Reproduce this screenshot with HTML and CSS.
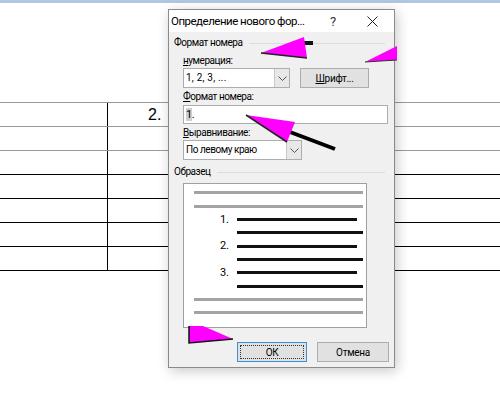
FILE: index.html
```html
<!DOCTYPE html>
<html lang="ru">
<head>
    <meta charset="UTF-8">
    <title>Определение нового формата номера</title>
    <link rel="stylesheet" href="styles.css">
</head>
<body>
    <div class="ribbon-edge"></div>

    <div class="doc">
        <div class="doc-table">
            <div class="doc-row gray"><div class="cell first"></div><div class="cell num">2.</div></div>
            <div class="doc-row gray"><div class="cell first"></div><div class="cell"></div></div>
            <div class="doc-row gray"><div class="cell first"></div><div class="cell"></div></div>
            <div class="doc-row"><div class="cell first"></div><div class="cell"></div></div>
            <div class="doc-row"><div class="cell first"></div><div class="cell"></div></div>
            <div class="doc-row"><div class="cell first"></div><div class="cell"></div></div>
            <div class="doc-row last"><div class="cell first"></div><div class="cell"></div></div>
        </div>
    </div>

    <div class="dialog">
        <div class="titlebar">
            <span class="title">Определение нового фор...</span>
            <span class="tb-help">?</span>
            <span class="tb-close">
                <svg width="11" height="11" viewBox="0 0 11 11"><path d="M0.5 0.5 L10.5 10.5 M10.5 0.5 L0.5 10.5" stroke="#222" stroke-width="1" fill="none"/></svg>
            </span>
        </div>

        <div class="dialog-body">
            <div class="group-head">
                <span>Формат номера</span>
                <div class="group-line"></div>
            </div>

            <div class="group-content">
                <div class="label label-first"><u>н</u>умерация:</div>
                <div class="field-row">
                    <div class="combo combo-num">
                        <span class="combo-text">1, 2, 3, ...</span>
                        <span class="combo-btn">
                            <svg width="9" height="5" viewBox="0 0 9 5"><path d="M0.5 0.5 L4.5 4.5 L8.5 0.5" stroke="#555" fill="none"/></svg>
                        </span>
                    </div>
                    <button class="btn btn-font"><u>Ш</u>рифт...</button>
                </div>

                <div class="label"><u>Ф</u>ормат номера:</div>
                <div class="text-input"><span class="sel">1</span>.</div>

                <div class="label"><u>В</u>ыравнивание:</div>
                <div class="combo combo-align">
                    <span class="combo-text">По левому краю</span>
                    <span class="combo-btn">
                        <svg width="9" height="5" viewBox="0 0 9 5"><path d="M0.5 0.5 L4.5 4.5 L8.5 0.5" stroke="#555" fill="none"/></svg>
                    </span>
                </div>
            </div>

            <div class="group-head group-sample">
                <span>Образец</span>
                <div class="group-line"></div>
            </div>

            <div class="preview">
                <div class="pv-row"><div class="pv-line gray"></div></div>
                <div class="pv-row"><div class="pv-line gray"></div></div>
                <div class="pv-row"><span class="pv-num">1.</span><div class="pv-line short"></div></div>
                <div class="pv-row"><span class="pv-num"></span><div class="pv-line"></div></div>
                <div class="pv-row"><span class="pv-num">2.</span><div class="pv-line short"></div></div>
                <div class="pv-row"><span class="pv-num"></span><div class="pv-line"></div></div>
                <div class="pv-row"><span class="pv-num">3.</span><div class="pv-line short"></div></div>
                <div class="pv-row"><span class="pv-num"></span><div class="pv-line"></div></div>
                <div class="pv-row"><div class="pv-line gray"></div></div>
                <div class="pv-row"><div class="pv-line gray"></div></div>
            </div>

            <div class="buttons">
                <button class="btn btn-ok"><span>ОК</span></button>
                <button class="btn btn-cancel">Отмена</button>
            </div>
        </div>
    </div>

    <!-- annotation arrows drawn over the screenshot -->
    <svg class="marks" width="500" height="394" viewBox="0 0 500 394">
        <rect x="303" y="41" width="10" height="4" fill="#111"/>
        <polygon points="261,53 304,37 307,58" fill="#f0f" />
        <path d="M261 53 L307 58" stroke="#222" stroke-width="1.5"/>

        <polygon points="365,62 397,46 397,60" fill="#f0f" />
        <path d="M365 62 L397 60" stroke="#333" stroke-width="1"/>

        <path d="M290 132 L335 149" stroke="#000" stroke-width="4"/>
        <polygon points="246,115 295,122 287,142" fill="#f0f" />
        <path d="M246 115 L287 142" stroke="#222" stroke-width="1.5"/>

        <polygon points="189,326 203,326 233,339 189,343" fill="#f0f" />
        <path d="M189 326 L189 343 L233 339" stroke="#111" stroke-width="1.5" fill="none"/>
    </svg>
</body>
</html>
```

FILE: styles.css
```css
* {
    box-sizing: border-box;
}

body {
    margin: 0;
    width: 500px;
    height: 394px;
    position: relative;
    overflow: hidden;
    background-color: #ffffff;
    font-family: 'Roboto', 'Noto Sans', sans-serif;
    color: #000;
}

.ribbon-edge {
    height: 3px;
    background-color: #b3c6df;
}

.doc {
    padding-top: 99px;
}

.doc-row {
    display: grid;
    grid-template-columns: 108px 1fr;
    height: 24px;
    border-top: 1px solid #000;
}

.doc-row.gray {
    border-top-color: #999;
}

.doc-row.last {
    height: 25px;
    border-bottom: 1px solid #000;
}

.cell.first {
    border-right: 1px solid #000;
}

.cell.num {
    padding-left: 40px;
    font-family: 'Liberation Sans', sans-serif;
    font-size: 16px;
    line-height: 23px;
}

/* dialog window */
.dialog {
    position: absolute;
    left: 168px;
    top: 9px;
    width: 227px;
    height: 359px;
    border: 1px solid #8a8a8a;
    background-color: #f0f0f0;
    box-shadow: 2px 3px 12px rgba(0, 0, 0, 0.22);
    display: flex;
    flex-direction: column;
}

.titlebar {
    height: 22px;
    background-color: #fff;
    display: flex;
    align-items: center;
    padding-left: 2px;
}

.title {
    flex: 1;
    min-width: 0;
    font-size: 11.5px;
    letter-spacing: -0.5px;
    white-space: nowrap;
}

.tb-help {
    width: 34px;
    text-align: center;
    font-size: 13px;
    color: #333;
}

.tb-close {
    width: 44px;
    display: flex;
    justify-content: center;
    align-items: center;
}

.dialog-body {
    flex: 1;
    padding: 4px 5px 0 5px;
    font-size: 10px;
    letter-spacing: -0.45px;
    display: flex;
    flex-direction: column;
}

.group-head {
    display: flex;
    align-items: center;
    height: 14px;
    line-height: 14px;
}

.group-line {
    flex: 1;
    height: 1px;
    margin-left: 6px;
    margin-right: 4px;
    background-color: #dcdcdc;
}

.group-content {
    padding-left: 9px;
    display: flex;
    flex-direction: column;
}

.label {
    height: 14px;
    line-height: 14px;
    margin-top: 2px;
}

.label-first {
    margin-top: 4px;
}

.field-row {
    display: flex;
    gap: 10px;
}

.combo {
    height: 20px;
    display: flex;
    background-color: #fff;
    border: 1px solid #adadad;
}

.combo-num {
    width: 107px;
}

.combo-align {
    width: 119px;
}

.combo-text {
    flex: 1;
    padding-left: 2px;
    line-height: 18px;
    white-space: nowrap;
}

.combo-num .combo-text {
    letter-spacing: 0.2px;
}

.combo-btn {
    width: 15px;
    background-color: #e8e8e8;
    border-left: 1px solid #c8c8c8;
    display: flex;
    align-items: center;
    justify-content: center;
}

.text-input {
    margin-top: 1px;
    width: 205px;
    height: 19px;
    background-color: #fff;
    border: 1px solid #adadad;
    padding-left: 2px;
    line-height: 17px;
    font-size: 11px;
}

.sel {
    background-color: #cfcfcf;
}

.btn {
    font-family: 'Roboto', 'Noto Sans', sans-serif;
    font-size: 10px;
    letter-spacing: -0.3px;
    color: #000;
    height: 20px;
    padding: 0;
    background-color: #e1e1e1;
    border: 1px solid #adadad;
}

.btn-font {
    width: 69px;
}

.group-sample {
    margin-top: 5px;
}

.preview {
    margin-top: 4px;
    margin-left: 9px;
    width: 184px;
    height: 145px;
    background-color: #fff;
    border: 1px solid #a0a0a0;
    padding: 2.3px 3px 0 10px;
    letter-spacing: 0;
}

.pv-row {
    height: 13.33px;
    display: flex;
    align-items: center;
}

.pv-num {
    width: 43px;
    padding-right: 8px;
    text-align: right;
    font-size: 11px;
    line-height: 10px;
}

.pv-line {
    flex: 1;
    height: 3px;
    background-color: #111;
}

.pv-line.short {
    margin-right: 6px;
}

.pv-line.gray {
    background-color: #a3a3a3;
}

.buttons {
    margin-top: 14px;
    display: flex;
    justify-content: flex-end;
    gap: 10px;
}

.btn-ok {
    width: 70px;
    border-color: #3c8fd0;
    padding: 2px;
}

.btn-ok span {
    display: block;
    height: 100%;
    line-height: 14px;
    border: 1px dotted #333;
}

.btn-cancel {
    width: 72px;
}

.marks {
    position: absolute;
    left: 0;
    top: 0;
}
```
